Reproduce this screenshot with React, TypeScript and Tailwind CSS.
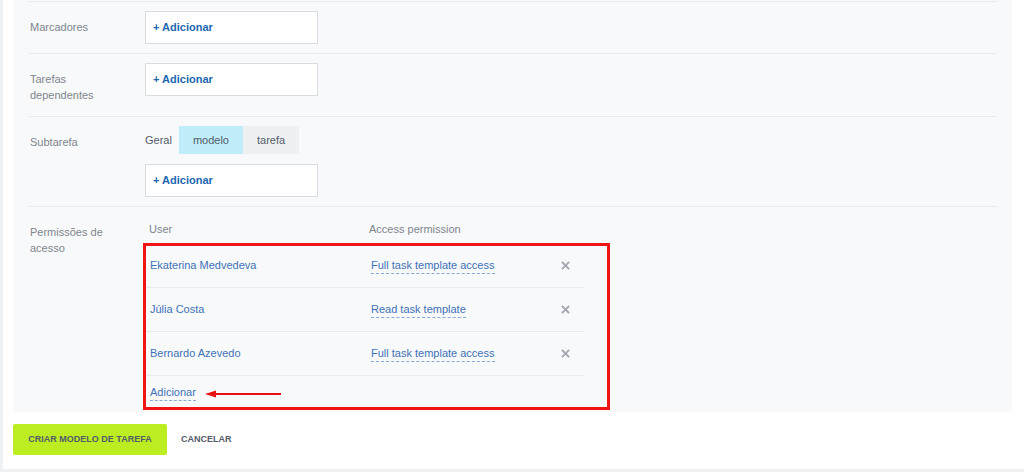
import React from 'react';

const font = "font-['Liberation_Sans',Arial,Helvetica,sans-serif]";

function AddBox() {
    return (
        <div className="w-[173px] h-[33px] bg-white border border-[#d9dde1] flex items-center pl-[7px]">
            <span className="text-[11px] font-bold text-[#2067b0]">+ Adicionar</span>
        </div>
    );
}

function Row({ label, children, last }: { label: React.ReactNode; children: React.ReactNode; last?: boolean }) {
    return (
        <div className={`flex border-t border-[#e8ebee] pt-[9px] ${last ? 'pb-0' : 'pb-[9px]'}`}>
            <div className="w-[116px] shrink-0 pl-[1px] pt-[8px] pb-[4px] text-[11px] leading-[16px] text-[#80868e]">
                <div className="w-[90px]">{label}</div>
            </div>
            <div className="flex-1">{children}</div>
        </div>
    );
}

function XIcon() {
    return (
        <svg width="9" height="9" viewBox="0 0 9 9" className="block">
            <path d="M1.5 1.5L7.5 7.5M7.5 1.5L1.5 7.5" stroke="#a3a9b0" strokeWidth="1.8" strokeLinecap="square" />
        </svg>
    );
}

const users = [
    { name: 'Ekaterina Medvedeva', perm: 'Full task template access' },
    { name: 'Júlia Costa', perm: 'Read task template' },
    { name: 'Bernardo Azevedo', perm: 'Full task template access' },
];

export default function App() {
    return (
        <div className={`${font} bg-[#eef2f4] h-[472px] w-[1024px] overflow-hidden`}>
            <div className="ml-[3px] h-[469px] bg-white pl-[10px]">
                {/* form panel */}
                <div className="w-[999px] bg-[#f8f9fa] pt-[1px] pl-[16px] pr-[15px] pb-[2px]">
                    <Row label="Marcadores">
                        <AddBox />
                    </Row>
                    <Row label="Tarefas dependentes">
                        <AddBox />
                    </Row>
                    <Row label="Subtarefa">
                        <div className="flex items-center h-[28px] text-[11px] text-[#535c69]">
                            <span className="mr-[7px]">Geral</span>
                            <span className="h-full flex items-center px-[14px] bg-[#bfedfa]">modelo</span>
                            <span className="h-full flex items-center px-[14px] bg-[#eef0f2]">tarefa</span>
                        </div>
                        <div className="mt-[10px]">
                            <AddBox />
                        </div>
                    </Row>
                    <Row label="Permissões de acesso" last>
                        <div className="w-[441px] -ml-[2px] text-[11px]">
                            <div className="grid grid-cols-[220px_192px_1fr] h-[27px] items-center text-[#80868e]">
                                <span className="pl-[6px]">User</span>
                                <span className="pl-[6px]">Access permission</span>
                                <span />
                            </div>
                            <div className="relative">
                                {users.map((u, i) => (
                                    <div key={u.name} className={`grid grid-cols-[220px_192px_1fr] ${i === 0 ? 'h-[45px]' : 'h-[44px]'} items-center border-b border-[#e8ebee]`}>
                                        <span className="pl-[7px] text-[#3e72b8]">{u.name}</span>
                                        <span className="pl-[8px]">
                                            <span className="text-[#3e72b8] border-b border-dashed border-[#88a9d6] leading-[15px] inline-block">{u.perm}</span>
                                        </span>
                                        <span className="flex justify-center pr-[8px]">
                                            <XIcon />
                                        </span>
                                    </div>
                                ))}
                                <div className="h-[34px] flex items-center pl-[7px]">
                                    <span className="text-[#3e72b8] border-b border-dashed border-[#88a9d6] leading-[15px] inline-block">Adicionar</span>
                                </div>
                                {/* annotation frame + arrow */}
                                <div className="absolute left-0 top-0 bottom-0 w-[467px] border-[3px] border-[#f01414] pointer-events-none" />
                                <svg className="absolute left-[62px] top-[146px]" width="78" height="10" viewBox="0 0 78 10">
                                    <path d="M0 5L11 1.5V8.5Z" fill="#e81010" />
                                    <path d="M10 5H76" stroke="#e81010" strokeWidth="2" />
                                </svg>
                            </div>
                        </div>
                    </Row>
                </div>
                {/* buttons */}
                <div className="flex items-center mt-[12px]">
                    <button className="h-[31px] w-[154px] bg-[#bbed21] rounded-[2px] text-[9px] font-bold text-[#535c69]">CRIAR MODELO DE TAREFA</button>
                    <button className="ml-[14px] text-[9px] font-bold text-[#535c69]">CANCELAR</button>
                </div>
            </div>
        </div>
    );
}
